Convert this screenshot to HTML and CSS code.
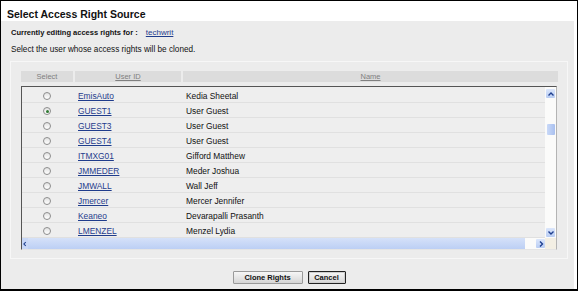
FILE: index.html
```html
<!DOCTYPE html>
<html lang="en">

<head>
    <meta charset="UTF-8">
    <title>Select Access Right Source</title>
    <link rel="stylesheet" href="styles.css">
</head>

<body>
    <div class="frame">
        <div class="title">Select Access Right Source</div>
        <div class="main">
            <div class="editing">
                <b>Currently editing access rights for :</b>
                <a href="#" class="link">techwrit</a>
            </div>
            <div class="hint">Select the user whose access rights will be cloned.</div>

            <div class="panel">
                <div class="head">
                    <span class="hcell c-sel">Select</span>
                    <span class="hcell c-id"><u>User ID</u></span>
                    <span class="hcell c-name"><u>Name</u></span>
                </div>
                <div class="listbox">
                    <div class="rows">
                        <div class="row"><span class="c-sel"><i class="radio"></i></span><span class="c-id"><a href="#" class="link">EmisAuto</a></span><span class="c-name">Kedia Sheetal</span></div>
                        <div class="row"><span class="c-sel"><i class="radio on"></i></span><span class="c-id"><a href="#" class="link">GUEST1</a></span><span class="c-name">User Guest</span></div>
                        <div class="row"><span class="c-sel"><i class="radio"></i></span><span class="c-id"><a href="#" class="link">GUEST3</a></span><span class="c-name">User Guest</span></div>
                        <div class="row"><span class="c-sel"><i class="radio"></i></span><span class="c-id"><a href="#" class="link">GUEST4</a></span><span class="c-name">User Guest</span></div>
                        <div class="row"><span class="c-sel"><i class="radio"></i></span><span class="c-id"><a href="#" class="link">ITMXG01</a></span><span class="c-name">Gifford Matthew</span></div>
                        <div class="row"><span class="c-sel"><i class="radio"></i></span><span class="c-id"><a href="#" class="link">JMMEDER</a></span><span class="c-name">Meder Joshua</span></div>
                        <div class="row"><span class="c-sel"><i class="radio"></i></span><span class="c-id"><a href="#" class="link">JMWALL</a></span><span class="c-name">Wall Jeff</span></div>
                        <div class="row"><span class="c-sel"><i class="radio"></i></span><span class="c-id"><a href="#" class="link">Jmercer</a></span><span class="c-name">Mercer Jennifer</span></div>
                        <div class="row"><span class="c-sel"><i class="radio"></i></span><span class="c-id"><a href="#" class="link">Keaneo</a></span><span class="c-name">Devarapalli Prasanth</span></div>
                        <div class="row"><span class="c-sel"><i class="radio"></i></span><span class="c-id"><a href="#" class="link">LMENZEL</a></span><span class="c-name">Menzel Lydia</span></div>
                    </div>
                    <!-- vertical scroll bar -->
                    <div class="vscroll">
                        <span class="sbtn"><svg width="8" height="8" viewBox="0 0 8 8"><path d="M1.5 5.5 L4 3 L6.5 5.5" fill="none" stroke="#1f3f8f" stroke-width="1.4"/></svg></span>
                        <span class="vthumb"></span>
                        <span class="sbtn down"><svg width="8" height="8" viewBox="0 0 8 8"><path d="M1.5 2.5 L4 5 L6.5 2.5" fill="none" stroke="#1f3f8f" stroke-width="1.4"/></svg></span>
                    </div>
                    <!-- horizontal scroll bar -->
                    <div class="hscroll">
                        <span class="harrow"><svg width="8" height="8" viewBox="0 0 8 8"><path d="M5 1.5 L2.5 4 L5 6.5" fill="none" stroke="#1f3f8f" stroke-width="1.4"/></svg></span>
                        <span class="hthumb"></span>
                        <span class="hspace"></span>
                        <span class="sbtn"><svg width="8" height="8" viewBox="0 0 8 8"><path d="M3 1.5 L5.5 4 L3 6.5" fill="none" stroke="#1f3f8f" stroke-width="1.4"/></svg></span>
                    </div>
                    <div class="corner"></div>
                </div>
            </div>

            <div class="buttons">
                <button class="btn clone">Clone Rights</button>
                <button class="btn cancel">Cancel</button>
            </div>
        </div>
    </div>
</body>

</html>
```

FILE: styles.css
```css
* {
    margin: 0;
    padding: 0;
    box-sizing: border-box;
}

body {
    font-family: "Liberation Sans", Arial, sans-serif;
    color: #111;
    background: #fff;
}

.frame {
    width: 578px;
    height: 291px;
    border: 1px solid #000;
    border-bottom-width: 2px;
    display: flex;
    flex-direction: column;
    background: #fff;
}

.title {
    height: 20px;
    padding: 7px 0 0 6px;
    font-size: 10.5px;
    line-height: 13px;
    font-weight: bold;
}

.main {
    flex: 1;
    margin-right: 3px;
    background: #ececec;
    padding-top: 6px;
}

.editing {
    margin-left: 10px;
    height: 12px;
    line-height: 12px;
    font-size: 7.5px;
}

.editing .link {
    margin-left: 6px;
    font-size: 8px;
}

.link {
    color: #1f3c8c;
    text-decoration: underline;
}

.hint {
    margin: 5px 0 0 10px;
    height: 12px;
    line-height: 12px;
    font-size: 8.2px;
}

.panel {
    margin: 5px 0 0 9px;
    width: 558px;
    height: 198px;
    border: 1px solid #f7f7f7;
    padding: 9px 9px 0 10px;
}

.head {
    display: flex;
    gap: 2px;
    height: 11px;
}

.hcell {
    background: #dcdcdc;
    color: #808080;
    font-size: 7.5px;
    line-height: 11px;
    text-align: center;
}

.head .c-sel {
    width: 52px;
}

.head .c-id {
    width: 106px;
}

.head .c-name {
    flex: 1;
}

/* the scrolling list */
.listbox {
    margin-top: 4px;
    display: grid;
    grid-template-columns: 523px 11px;
    grid-template-rows: 151px 11px;
    border-top: 1px solid #555;
    border-left: 1px solid #555;
    border-right: 1px solid #b4b4b4;
    border-bottom: 1px solid #e4e4e4;
    width: 536px;
}

.rows {
    overflow: hidden;
    background: #eeeeee;
    padding-top: 1px;
}

.row {
    display: flex;
    height: 15px;
    align-items: center;
    border-bottom: 1px solid #e0e0e0;
    font-size: 8.4px;
    padding-top: 1px;
}

.row .c-sel {
    width: 52px;
    text-align: center;
    padding-right: 2px;
}

.row .c-id {
    width: 108px;
    margin-left: 2px;
    padding-left: 2px;
}

.row .c-name {
    padding-left: 2px;
}

.radio {
    display: inline-block;
    width: 8px;
    height: 8px;
    border: 1px solid #8d8d8d;
    border-radius: 50%;
    background: linear-gradient(#e2e2e2, #ffffff);
    vertical-align: middle;
    position: relative;
}

.radio.on::after {
    content: "";
    position: absolute;
    left: 1.5px;
    top: 1.5px;
    width: 3px;
    height: 3px;
    border-radius: 50%;
    background: #2f7a33;
}

.vscroll {
    background: #fbfbfa;
    display: flex;
    flex-direction: column;
    align-items: center;
    padding-top: 2px;
}

.sbtn {
    width: 9px;
    height: 9px;
    background: linear-gradient(#dbe6fb, #b9cdf3);
    border-radius: 1px;
    display: flex;
    align-items: center;
    justify-content: center;
}

.vthumb {
    margin-top: 26px;
    width: 8px;
    height: 11px;
    background: linear-gradient(90deg, #c9d9f8, #a9c0ef);
    border-radius: 1px;
}

.sbtn.down {
    margin-top: auto;
    margin-bottom: 1px;
}

.hscroll {
    display: flex;
    align-items: center;
    background: #fbfbfa;
}

.harrow {
    width: 6px;
    height: 11px;
    display: flex;
    align-items: center;
    justify-content: center;
    background: #c9d8f7;
}

.hthumb {
    width: 497px;
    height: 11px;
    background: linear-gradient(#d5e1f9, #bccff4);
}

.hspace {
    flex: 1;
}

.corner {
    background: #f3efe4;
}

.buttons {
    display: flex;
    justify-content: center;
    gap: 5px;
    margin-top: 12px;
    padding-left: 3px;
}

.btn {
    height: 13px;
    font-family: "Liberation Sans", Arial, sans-serif;
    font-size: 7.5px;
    font-weight: bold;
    color: #111;
    background: linear-gradient(#f6f6f6, #d6d6d6);
    border: 1px solid #9a9a9a;
    border-radius: 1px;
}

.clone {
    width: 70px;
}

.cancel {
    width: 38px;
    border-color: #222;
    box-shadow: inset 0 0 0 1px #cfcfcf;
}
```
